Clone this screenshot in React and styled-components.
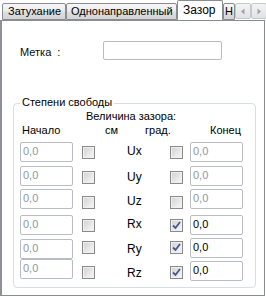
import React from 'react'
import styled, { createGlobalStyle } from 'styled-components'

const Global = createGlobalStyle`
  html, body { margin: 0; padding: 0; background: #fff; }
  body { width: 266px; height: 298px; overflow: hidden; }
  * { box-sizing: border-box; }
`

const Window = styled.div`
  width: 266px;
  height: 298px;
  background: #fff;
  font-family: "Liberation Sans", Arial, sans-serif;
  font-size: 11px;
  color: #000;
`

const TabStrip = styled.div`
  display: flex;
  align-items: flex-end;
  height: 20px;
  padding-left: 2px;
  position: relative;
  z-index: 1;
  overflow: hidden;
`

const Tab = styled.div`
  flex: none;
  width: ${p => p.w}px;
  height: ${p => (p.active ? 21 : 17)}px;
  margin-bottom: ${p => (p.active ? -1 : 0)}px;
  border: 1px solid #898c95;
  border-bottom: ${p => (p.active ? 'none' : '1px solid #898c95')};
  border-radius: 2px 2px 0 0;
  background: ${p =>
    p.active
      ? '#fff'
      : 'linear-gradient(#f6f6f6, #ececec 45%, #dedede 55%, #d4d4d4)'};
  line-height: ${p => (p.active ? 18 : 15)}px;
  font-size: ${p => (p.active ? 12 : 11)}px;
  padding-left: ${p => p.pad}px;
  white-space: nowrap;
  overflow: hidden;
`

const Scroller = styled.div`
  display: flex;
  margin-left: auto;
  margin-right: 1px;
  margin-bottom: 1px;
  background: #fff;
`

const ScrollBtn = styled.div`
  width: 16px;
  height: 16px;
  border: 1px solid #c4c8d0;
  border-radius: 2px;
  background: linear-gradient(#f4f4f4, #e2e2e2);
  display: flex;
  align-items: center;
  justify-content: center;
`

const Panel = styled.div`
  width: 265px;
  height: 276px;
  border: 1px solid #898c95;
  border-left-width: 2px;
  border-left-color: #8d9097;
  background: #fff;
  padding-top: 20px;
`

const FieldRow = styled.div`
  display: flex;
  align-items: center;
  height: 19px;
  padding-left: 18px;
`

const FieldLabel = styled.div`
  width: 83px;
  padding-top: 2px;
  color: #0a0a0a;
`

const TextBox = styled.div`
  width: ${p => p.w}px;
  height: ${p => p.h}px;
  border: 1px solid #b9bcc2;
  border-radius: 2px;
  background: #fff;
  padding: 2px 2px 0;
  line-height: 13px;
  color: ${p => (p.disabled ? '#8c98a8' : '#000')};
  margin-top: ${p => p.top || 0}px;
  margin-left: ${p => p.ml || 0}px;
  flex: none;
`

const Group = styled.div`
  position: relative;
  margin: 43px 0 0 11px;
  width: 243px;
  height: 185px;
  border: 1px solid #d5dfe5;
  border-radius: 4px;
`

const Legend = styled.div`
  position: absolute;
  top: -8px;
  left: 6px;
  padding: 0 2px;
  background: #fff;
  line-height: 13px;
`

const Title = styled.div`
  margin: 6px 0 0 72px;
  line-height: 13px;
`

const HeaderRow = styled.div`
  display: flex;
  margin-top: 1px;
  padding-left: 8px;
  line-height: 13px;
  height: 13px;
`

const HeaderCell = styled.div`
  width: ${p => p.w}px;
  flex: none;
`

const Rows = styled.div`
  margin-top: 5px;
`

const Row = styled.div`
  display: flex;
  align-items: flex-start;
  height: ${p => p.h}px;
  padding-left: 6px;
`

const Box = styled.div`
  width: 13px;
  height: 13px;
  flex: none;
  margin-top: ${p => p.top}px;
  margin-left: ${p => p.ml}px;
  border: 1px solid #8a8a8a;
  background: linear-gradient(135deg, #d0d0d0, #ebebeb 65%, #f8f8f8);
  box-shadow: inset 0 0 0 1px #f0f0f0;
  display: flex;
  align-items: center;
  justify-content: center;
`

const AxisCell = styled.div`
  width: 75px;
  flex: none;
  padding-left: 32px;
  margin-top: ${p => p.top}px;
  line-height: 13px;
  font-size: 12px;
`

const rows = [
  { axis: 'Ux', h: 24, cb: 4, lbl: 3, right: 0, on: false },
  { axis: 'Uy', h: 23, cb: 5, lbl: 5, right: 0, on: false },
  { axis: 'Uz', h: 26, cb: 7, lbl: 6, right: 0, on: false },
  { axis: 'Rx', h: 24, cb: 4, lbl: 3, right: 0, on: true },
  { axis: 'Ry', h: 20, cb: 2, lbl: 4, right: -1, on: true },
  { axis: 'Rz', h: 20, cb: 7, lbl: 8, right: 2, on: true },
]

const Check = ({ on, top, ml }) => (
  <Box top={top} ml={ml}>
    {on && (
      <svg width="9" height="9" viewBox="0 0 9 9">
        <path d="M1 4.5 L3.5 7 L8 1" fill="none" stroke="#45598f" strokeWidth="1.8" />
      </svg>
    )}
  </Box>
)

const Arrow = ({ dir }) => (
  <svg width="6" height="7" viewBox="0 0 6 7">
    <path d={dir === 'left' ? 'M4.5 0.5 L1 3.5 L4.5 6.5 Z' : 'M1.5 0.5 L5 3.5 L1.5 6.5 Z'} fill="#9aa3b5" />
  </svg>
)

const App = () => {
  return (
    <Window>
      <Global />
      <TabStrip>
        <Tab w={64} pad={5}>Затухание</Tab>
        <Tab w={111} pad={4}>Однонаправленный</Tab>
        <Tab w={46} pad={5} active>Зазор</Tab>
        <Tab w={12} pad={1}>Н</Tab>
        <Scroller>
          <ScrollBtn><Arrow dir="left" /></ScrollBtn>
          <ScrollBtn><Arrow dir="right" /></ScrollBtn>
        </Scroller>
      </TabStrip>
      <Panel>
        <FieldRow>
          <FieldLabel>Метка&nbsp; :</FieldLabel>
          <TextBox w={119} h={19} />
        </FieldRow>
        <Group>
          <Legend>Степени свободы</Legend>
          <Title>Величина зазора:</Title>
          <HeaderRow>
            <HeaderCell w={83}>Начало</HeaderCell>
            <HeaderCell w={40}>см</HeaderCell>
            <HeaderCell w={65}>град.</HeaderCell>
            <HeaderCell w={40}>Конец</HeaderCell>
          </HeaderRow>
          <Rows>
            {rows.map(r => (
              <Row key={r.axis} h={r.h}>
                <TextBox w={53} h={20} disabled>0,0</TextBox>
                <Check top={r.cb} ml={9} on={false} />
                <AxisCell top={r.lbl}>{r.axis}</AxisCell>
                <Check top={r.cb} ml={0} on={r.on} />
                <TextBox w={53} h={20} top={r.right} ml={7} disabled={!r.on}>0,0</TextBox>
              </Row>
            ))}
          </Rows>
        </Group>
      </Panel>
    </Window>
  )
}

export default App
